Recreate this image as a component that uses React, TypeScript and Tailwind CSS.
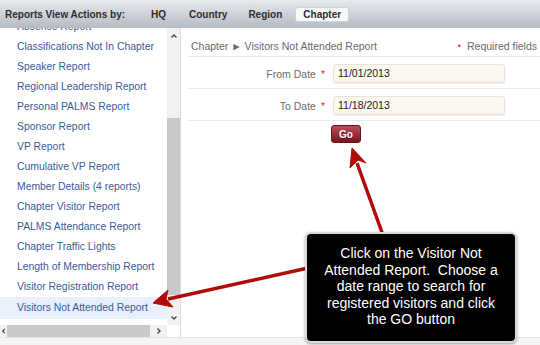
import React from "react";

const reports = [
  "Absence Report",
  "Classifications Not In Chapter",
  "Speaker Report",
  "Regional Leadership Report",
  "Personal PALMS Report",
  "Sponsor Report",
  "VP Report",
  "Cumulative VP Report",
  "Member Details (4 reports)",
  "Chapter Visitor Report",
  "PALMS Attendance Report",
  "Chapter Traffic Lights",
  "Length of Membership Report",
  "Visitor Registration Report",
];

function Chevron({ dir }: { dir: "up" | "down" | "left" | "right" }) {
  const rot = { up: 0, right: 90, down: 180, left: 270 }[dir];
  return (
    <svg width="8" height="8" viewBox="0 0 8 8" style={{ transform: `rotate(${rot}deg)` }}>
      <path d="M1.5 5.5 L4 3 L6.5 5.5" fill="none" stroke="#444" strokeWidth="1.4" />
    </svg>
  );
}

function Sidebar() {
  return (
    <div className="flex w-[181px] shrink-0 flex-col border-r border-[#dcdcdc]">
      <div className="flex min-h-0 flex-1">
        <ul className="w-[167px] overflow-hidden">
          <div className="-mt-[11px]">
            {reports.map((r) => (
              <li key={r} className="flex h-[20px] items-center pl-[17px] text-[10.4px] text-[#3a5b9a]">
                {r}
              </li>
            ))}
            <li className="flex h-[22px] items-center bg-[#e7f0fb] pl-[17px] text-[10.4px] text-[#3a5b9a]">
              Visitors Not Attended Report
            </li>
          </div>
        </ul>
        <div className="flex w-[13px] flex-col bg-[#f1f1f1]">
          <div className="flex h-[14px] items-center justify-center pt-[2px]">
            <Chevron dir="up" />
          </div>
          <div className="h-[76px]" />
          <div className="h-[177px] bg-[#c9c9c9]" />
          <div className="flex-1" />
          <div className="flex h-[14px] items-center justify-center">
            <Chevron dir="down" />
          </div>
        </div>
      </div>
      <div className="flex h-[12px] w-[167px] items-center bg-[#f1f1f1]">
        <div className="flex w-[7px] justify-center">
          <Chevron dir="left" />
        </div>
        <div className="h-full w-[143px] bg-[#c9c9c9]" />
        <div className="flex flex-1 justify-center">
          <Chevron dir="right" />
        </div>
      </div>
    </div>
  );
}

function DateRow({ label, value }: { label: string; value: string }) {
  return (
    <div className="flex h-[32px] items-start border-b border-[#ececec] pt-[7px]">
      <div className="flex w-[137px] justify-end gap-[5px] pt-[3px] text-[10.5px] text-[#6b6b6b]">
        <span>{label}</span>
        <span className="text-[#e23c3c]">*</span>
      </div>
      <div className="ml-[8px] flex h-[19px] w-[172px] items-center rounded-[3px] border border-[#e9e4d9] bg-[#fdf8ef] pl-[4px] text-[10.5px] text-[#222] shadow-[0_1px_1px_rgba(0,0,0,0.06)]">
        {value}
      </div>
    </div>
  );
}

function ReportForm() {
  return (
    <div className="flex-1 pl-[7px] pt-[9px]">
      <div className="flex h-[20px] items-center justify-between border-b border-[#e6e6e6] pl-[3px] pr-[3px] text-[10.5px] text-[#6a6a6a]">
        <span>Chapter ► Visitors Not Attended Report</span>
        <span className="flex items-center gap-[6px]">
          <span className="text-[9px] text-[#e23c3c]">•</span>Required fields
        </span>
      </div>
      <DateRow label="From Date" value="11/01/2013" />
      <DateRow label="To Date" value="11/18/2013" />
      <div className="pl-[143px] pt-[4px]">
        <button className="flex h-[18px] w-[30px] items-center justify-center rounded-[3px] border border-[#6c1019] bg-linear-to-b from-[#bb4a57] to-[#7a1320] text-[10px] font-bold text-white [text-shadow:0_1px_1px_rgba(0,0,0,0.5)]">
          Go
        </button>
      </div>
    </div>
  );
}

function Annotation() {
  return (
    <>
      <svg className="pointer-events-none absolute left-0 top-0" width="540" height="345">
        <g fill="#b00a0a" stroke="#b00a0a">
          <line x1="384" y1="238" x2="357" y2="163" strokeWidth="3.5" />
          <polygon points="352,148 366,163 358,160 350,168" strokeWidth="1" strokeLinejoin="round" />
          <line x1="308" y1="268" x2="168" y2="299" strokeWidth="3.5" />
          <polygon points="153,303 168,290 166,299 173,307" strokeWidth="1" strokeLinejoin="round" />
        </g>
      </svg>
      <div className="absolute left-[305px] top-[232px] flex h-[111px] w-[212px] items-center justify-center rounded-[6px] border-2 border-[#d8d8d8] bg-black shadow-[0_1px_3px_rgba(0,0,0,0.35)]">
        <p className="px-[6px] pb-[2px] text-center text-[14px] leading-[16.5px] text-white">
          Click on the Visitor Not
          <br />
          Attended Report.&nbsp; Choose a
          <br />
          date range to search for
          <br />
          registered visitors and click
          <br />
          the GO button
        </p>
      </div>
    </>
  );
}

export default function App() {
  return (
    <div className="relative flex h-[345px] w-[540px] flex-col overflow-hidden bg-white font-['Liberation_Sans',Arial,sans-serif]">
      <div className="flex h-[28px] shrink-0 items-center bg-linear-to-b from-[#e8eaef] to-[#b6bac2] text-[10px] font-bold text-[#2e2e2e]">
        <span className="pl-[5px]">Reports View Actions by:</span>
        <span className="ml-[26px]">HQ</span>
        <span className="ml-[23px]">Country</span>
        <span className="ml-[21px]">Region</span>
        <span className="ml-[13px] flex h-[15px] w-[54px] items-center justify-center rounded-[3px] border border-[#cfd2d8] bg-[#f7f8fa]">
          Chapter
        </span>
      </div>
      <div className="flex min-h-0 flex-1">
        <Sidebar />
        <ReportForm />
      </div>
      <div className="h-[8px] shrink-0 border-t border-[#e4e4e4] bg-[#f4f4f4]" />
      <Annotation />
    </div>
  );
}
